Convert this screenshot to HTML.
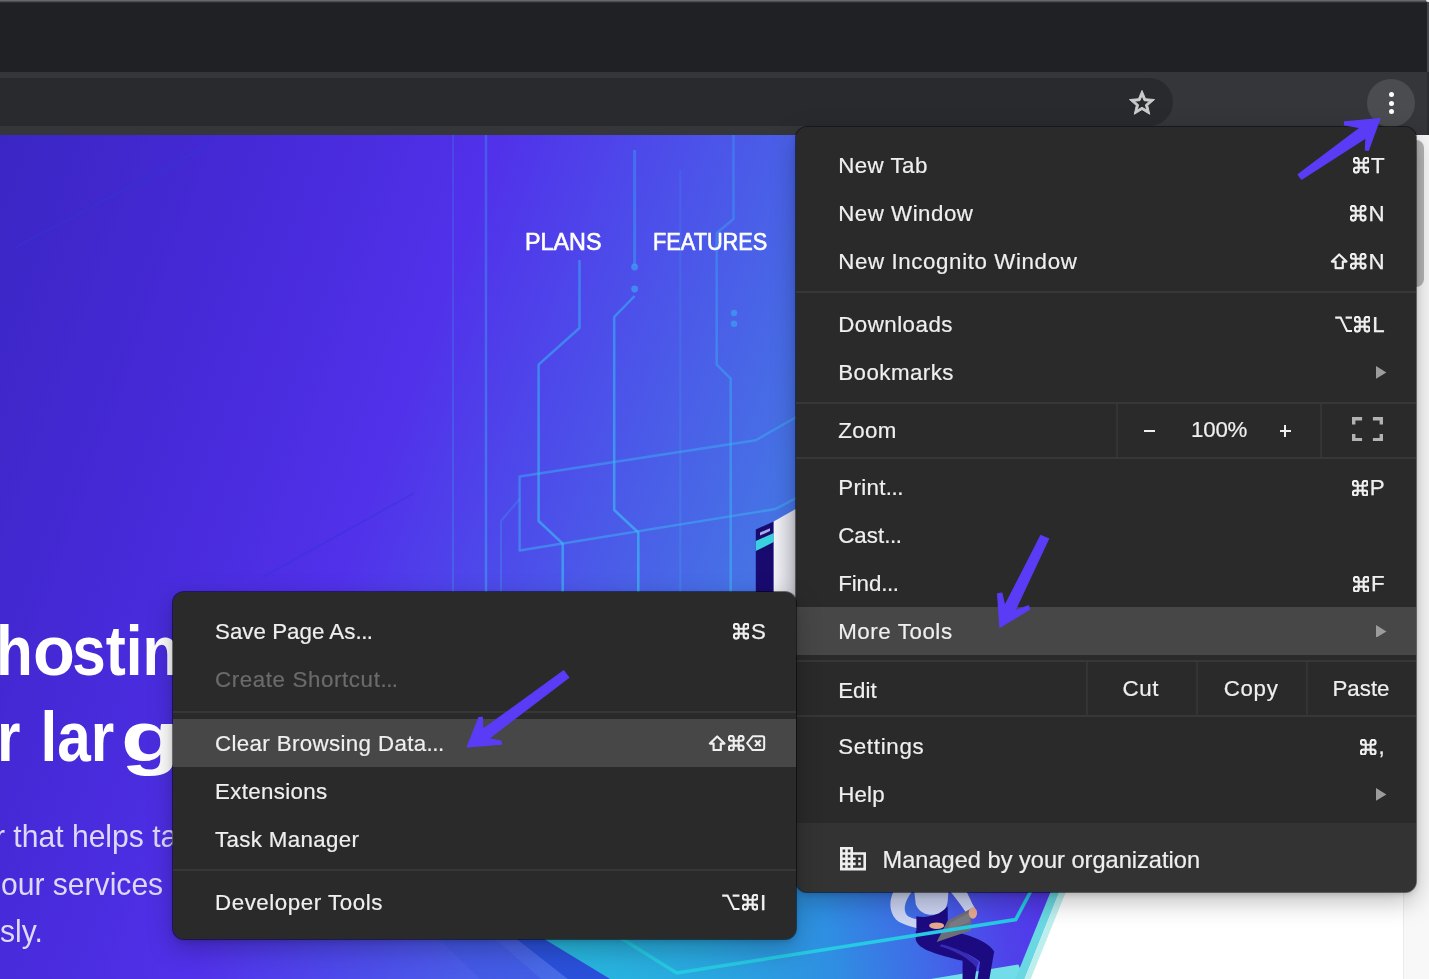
<!DOCTYPE html>
<html>
<head>
<meta charset="utf-8">
<title>Chrome menu</title>
<style>
html,body{margin:0;padding:0;}
body{width:1429px;height:979px;overflow:hidden;position:relative;background:#fff;font-family:"Liberation Sans",sans-serif;}
.abs{position:absolute;}
#titlebar{left:0;top:0;width:1429px;height:72px;background:#202124;}
#titlebar .hl{left:0;top:0;width:1429px;height:3px;background:linear-gradient(#77787b,#45464a 55%,#202124);}
#toolbar{left:0;top:72px;width:1429px;height:63px;background:#35363a;}
#omni{left:-40px;top:78px;width:1213px;height:48px;border-radius:24px;background:#292a2e;}
#kebab{left:1367px;top:79px;width:48px;height:48px;border-radius:24px;background:#4b4c50;}
#kebab i{position:absolute;left:21.5px;width:5px;height:5px;border-radius:50%;background:#fff;}
#page{will-change:transform;left:0;top:135px;width:1403px;height:844px;overflow:hidden;background:#fff;}
#track{left:1403px;top:135px;width:26px;height:844px;background:#f8f8f8;border-left:1px solid #ebebeb;box-sizing:border-box;}
#thumb{left:1408px;top:140px;width:16px;height:147px;border-radius:8px;background:#b4b4b4;}
.menu{will-change:transform;background:#2a2a2b;border-radius:11px;box-shadow:0 0 0 1px rgba(0,0,0,.5),0 9px 26px rgba(0,0,0,.27),0 2px 6px rgba(0,0,0,.16);overflow:hidden;}
#main{left:796px;top:127px;width:619.6px;height:765px;}
#sub{left:173px;top:592px;width:623.4px;height:346.6px;}
.t{position:absolute;white-space:nowrap;color:#efefef;font-size:22.3px;line-height:28px;height:28px;letter-spacing:0.45px;-webkit-text-stroke-width:.2px;}
.dis{color:#6b6b6b;}
.sep{position:absolute;left:0;right:0;height:2px;background:#373737;}
.vsep{position:absolute;width:2px;background:#343434;}
.hi{position:absolute;left:0;right:0;background:#474747;}
.sc{position:absolute;display:flex;align-items:flex-end;justify-content:flex-end;height:28px;color:#efefef;font-size:22.3px;line-height:28px;white-space:nowrap;-webkit-text-stroke-width:.25px;}
.sc svg{margin-bottom:6.1px;margin-right:1.8px;flex:none;}
.d{letter-spacing:-0.5px;}
svg{display:block;}
.nav{color:#fff;font-size:24.1px;line-height:28px;white-space:nowrap;transform-origin:0 0;-webkit-text-stroke:.65px #fff;}
.h1{color:#fff;font-weight:bold;font-size:70px;line-height:80px;white-space:nowrap;transform-origin:0 0;transform:scaleX(.86);}
.p{color:#ddd9fb;font-size:32px;line-height:40px;white-space:nowrap;transform-origin:0 0;transform:scaleX(.94);}
</style>
</head>
<body>
<div id="titlebar" class="abs"><div class="hl abs"></div></div>
<div id="toolbar" class="abs"></div>
<div class="abs" style="left:1427px;top:2px;width:2px;height:70px;background:#46474b"></div>
<div class="abs" style="left:1427px;top:72px;width:2px;height:63px;background:#2c2d31"></div>
<div class="abs" style="left:1426px;top:0;width:3px;height:2px;background:#e8e8e8;border-bottom-left-radius:3px"></div>
<div id="omni" class="abs"></div>
<svg class="abs" style="left:1127.4px;top:87.8px" width="30" height="30" viewBox="0 0 24 24"><path fill="#cbccce" stroke="#cbccce" stroke-width=".8" d="M22 9.24l-7.19-.62L12 2 9.19 8.63 2 9.24l5.46 4.73L5.82 21 12 17.27 18.18 21l-1.63-7.03L22 9.24zM12 15.4l-3.76 2.27 1-4.28-3.32-2.88 4.38-.38L12 6.1l1.71 4.04 4.38.38-3.32 2.88 1 4.28L12 15.4z"/></svg>
<div id="kebab" class="abs"><i style="top:13px"></i><i style="top:21.5px"></i><i style="top:30px"></i></div>
<div id="page" class="abs">
<svg class="abs" style="left:0;top:0" width="1403" height="844" viewBox="0 135 1403 844">
<defs>
<linearGradient id="bg" gradientUnits="userSpaceOnUse" x1="0" y1="135" x2="800" y2="427">
<stop offset="0" stop-color="#3b26c4"/><stop offset=".28" stop-color="#4529d6"/><stop offset=".55" stop-color="#5131ea"/><stop offset=".72" stop-color="#4d4aea"/><stop offset=".86" stop-color="#4a5ee8"/><stop offset="1" stop-color="#4672e5"/>
</linearGradient>
<linearGradient id="plat" gradientUnits="userSpaceOnUse" x1="560" y1="979" x2="1050" y2="900">
<stop offset="0" stop-color="#27b8de"/><stop offset=".3" stop-color="#29a6df"/><stop offset=".55" stop-color="#2f8ee2"/><stop offset=".74" stop-color="#4168e8"/><stop offset=".9" stop-color="#4f42ea"/><stop offset="1" stop-color="#5236ea"/>
</linearGradient>
<linearGradient id="ln" gradientUnits="userSpaceOnUse" x1="0" y1="135" x2="0" y2="600"><stop offset="0" stop-color="#3a94f2"/><stop offset=".5" stop-color="#38acf4"/><stop offset="1" stop-color="#3cc4f6"/></linearGradient>
<linearGradient id="wh" x1="0" y1="0" x2="1" y2="0"><stop offset="0" stop-color="#f4f4f8"/><stop offset="1" stop-color="#cfcfdc"/></linearGradient>
</defs>
<rect x="0" y="135" width="1403" height="844" fill="#fff"/>
<!-- purple/blue hero background -->
<path d="M0 135 H1403 V880 H1058 L1020 979 H0 Z" fill="url(#bg)"/>
<!-- circuit lines -->
<g fill="none" stroke="url(#ln)" stroke-linejoin="round">
<path d="M453 135 V600" stroke-width="2" opacity=".22"/>
<path d="M486 135 V600" stroke-width="2.4" opacity=".42"/>
<path d="M579.5 260 V328 L538.6 364.6 V521 L562.7 543.7 V600" stroke-width="2.5" opacity=".62"/>
<path d="M634.6 150 V266" stroke-width="3" opacity=".5"/>
<path d="M634.6 296 L614.2 317 V510 L638.3 532.5 V600" stroke-width="2.5" opacity=".66"/>
<path d="M680.3 170 V600" stroke-width="2" opacity=".2"/>
<path d="M733.5 135 V219 L716.7 233 V364.6 L730.7 378.6 V600" stroke-width="2.4" opacity=".5"/>
<path d="M800 415 L755.9 440.2 L519.6 476.5 V550.5 L775.5 509 L800 496" stroke-width="2.4" opacity=".45"/>
<path d="M519.6 499 L501 521 V600" stroke-width="2" opacity=".22"/>
</g>
<g fill="#3f9cf2" opacity=".75">
<circle cx="634.6" cy="267" r="3.4"/><circle cx="634.6" cy="289" r="3.4"/>
<circle cx="734" cy="313" r="3.2"/><circle cx="734" cy="323.7" r="3.2"/>
</g>
<!-- faint hex outlines on the left -->
<g fill="none" stroke="#3534d8" stroke-width="2" opacity=".45">
<path d="M16 247 L213 143"/>
<path d="M263 577 L414 493"/>
</g>
<!-- server illustration peeking left of the menu -->
<path d="M755.8 529.4 L773.7 521.5 V600 H755.8 Z" fill="#190a70"/>
<path d="M755.8 541 L773.7 533 V542 L755.8 551 Z" fill="#39d0e0"/>
<path d="M760 532.6 L770 528.2 V531 L760 535.6 Z" fill="#a9aee8"/>
<path d="M773.7 521.5 L800 506.5 V600 H773.7 Z" fill="url(#wh)"/>
<!-- bottom platform -->
<path d="M485 930 L541 979 H480 L430 930 Z" fill="#3f56e2" opacity=".6"/>
<path d="M505 930 H545 L610.2 979 H567.7 Z" fill="#2a50da"/>
<path d="M538 925 H796 V885 H1054 L1018 979 H610.2 L545 939.6 Z" fill="url(#plat)"/>
<!-- cyan lines -->
<g transform="translate(796 880) scale(.21973)">
<path d="M610 451 L1012 384 L1040 451 Z" fill="#72dde9"/>
<path d="M1160 50 L1200 50 L1040 451 L998 451 Z" fill="#69d8e2"/>
<path d="M1200 50 L1230 50 L1068 451 L1040 451 Z" fill="#bdeeee"/>
<!-- person -->
<path d="M538 50 L545 110 C560 150 600 160 620 158 C660 160 682 140 690 100 L694 50 Z" fill="#ccd4f3"/>
<path d="M445 50 C425 90 420 140 455 180 C480 205 540 215 600 235 L618 198 C570 182 520 175 505 160 C485 135 495 95 530 50 Z" fill="#ccd4f3"/>
<path d="M700 50 L775 50 C790 80 800 105 815 130 L775 150 C755 120 730 85 700 50 Z" fill="#ccd4f3"/>
<path d="M548 165 C580 172 650 170 690 120 L692 235 L548 245 Z" fill="#1c0a80"/>
<path d="M690 232 C780 245 870 275 902 325 L880 451 L826 451 L838 372 C790 335 720 305 650 290 Z" fill="#1c0a80"/>
<path d="M545 232 L545 272 C558 318 640 338 758 368 L758 451 L814 451 L826 372 C770 330 700 290 692 232 Z" fill="#1c0a80"/>
<path d="M660 292 C720 305 790 338 832 372 L822 400 C780 350 710 318 655 302 Z" fill="#3a2bb4"/>
<path d="M690 186 L800 128 L796 230 L640 282 Z" fill="#6d6d77"/>
<path d="M700 196 L792 146 L790 190 L690 230 Z" fill="#7a7a84"/>
<ellipse cx="640" cy="208" rx="34" ry="15" fill="#e6a88f"/>
<ellipse cx="805" cy="150" rx="19" ry="26" fill="#e6a88f"/>
</g>
<path d="M608 930 L676.7 972.9 L1015.7 919.6 L1033 887" fill="none" stroke="#26cae2" stroke-width="3.5" stroke-linejoin="miter"/>
</svg>
<div class="abs nav" style="left:525.4px;top:92.8px;transform:scaleX(.968)">PLANS</div>
<div class="abs nav" style="left:653.4px;top:92.8px;transform:scaleX(.902)">FEATURES</div>
<div class="abs h1" style="left:-4px;top:476.2px">h<span style="display:inline-block;transform:scaleX(1.14);transform-origin:0 50%;margin-right:3.2px">o</span>sting</div>
<div class="abs h1" style="left:-3px;top:561.7px">r<span style="margin-left:4px"> </span>lar<span style="display:inline-block;transform:scaleX(1.62);transform-origin:0 50%;margin-left:8px">g</span></div>
<div class="abs p" style="left:-5px;top:681px">r that helps ta</div>
<div class="abs p" style="left:0.5px;top:728.7px">our services</div>
<div class="abs p" style="left:0px;top:776.4px">sly.</div>

</div>
<div id="track" class="abs"></div>
<div id="thumb" class="abs"></div>
<div id="main" class="abs menu">
<div class="hi" style="top:479.5px;height:48.5px"></div>
<div class="abs" style="left:0;right:0;top:695.5px;bottom:0;background:#333334"></div>
<div class="sep" style="top:164.3px"></div>
<div class="sep" style="top:274.5px"></div>
<div class="sep" style="top:329.6px"></div>
<div class="sep" style="top:532.6px"></div>
<div class="sep" style="top:587.6px"></div>
<div class="t " style="left:42.2px;top:24.6px;letter-spacing:0.46px;">New Tab</div>
<div class="t " style="left:42.2px;top:72.6px;letter-spacing:0.52px;">New Window</div>
<div class="t " style="left:42.2px;top:120.6px;letter-spacing:0.62px;">New Incognito Window</div>
<div class="t " style="left:42.2px;top:183.8px;letter-spacing:0.49px;">Downloads</div>
<div class="t " style="left:42.2px;top:231.9px;letter-spacing:0.47px;">Bookmarks</div>
<div class="t " style="left:42.2px;top:290.2px;letter-spacing:0.40px;">Zoom</div>
<div class="t " style="left:42.2px;top:347.3px;letter-spacing:0.35px;">Print<span class="d">...</span></div>
<div class="t " style="left:42.2px;top:395.1px;letter-spacing:0.08px;">Cast<span class="d">...</span></div>
<div class="t " style="left:42.2px;top:443.0px;letter-spacing:-0.07px;">Find<span class="d">...</span></div>
<div class="t " style="left:42.2px;top:491.2px;letter-spacing:0.58px;">More Tools</div>
<div class="t " style="left:42.2px;top:549.6px;letter-spacing:0.03px;">Edit</div>
<div class="t " style="left:42.2px;top:606.2px;letter-spacing:0.70px;">Settings</div>
<div class="t " style="left:42.2px;top:654.4px;letter-spacing:0.21px;">Help</div>
<div class="t " style="left:86.6px;top:719.1px;letter-spacing:0.00px;font-size:23.6px;">Managed by your organization</div>
<div class="sc" style="right:31.0px;top:24.6px;"><svg width="16.4" height="16.4" viewBox="2 2 20 20" fill="none" stroke="#efefef" stroke-width="2.62"><path d="M15 9V6a3 3 0 1 1 3 3H6a3 3 0 1 1 3-3v12a3 3 0 1 1-3-3h12a3 3 0 1 1-3 3V9z"/></svg><span>T</span></div>
<div class="sc" style="right:31.0px;top:72.6px;"><svg width="16.4" height="16.4" viewBox="2 2 20 20" fill="none" stroke="#efefef" stroke-width="2.62"><path d="M15 9V6a3 3 0 1 1 3 3H6a3 3 0 1 1 3-3v12a3 3 0 1 1-3-3h12a3 3 0 1 1-3 3V9z"/></svg><span>N</span></div>
<div class="sc" style="right:31.0px;top:120.6px;"><svg width="18.4" height="16.4" viewBox="0 0 18.4 16.4" fill="none" stroke="#efefef" stroke-width="2.15" stroke-linejoin="round"><path d="M9.2 1.4 L1.9 8.6 H5.6 V15.2 H12.8 V8.6 H16.5 Z"/></svg><svg width="16.4" height="16.4" viewBox="2 2 20 20" fill="none" stroke="#efefef" stroke-width="2.62"><path d="M15 9V6a3 3 0 1 1 3 3H6a3 3 0 1 1 3-3v12a3 3 0 1 1-3-3h12a3 3 0 1 1-3 3V9z"/></svg><span>N</span></div>
<div class="sc" style="right:31.0px;top:183.8px;"><svg width="17.7" height="16.4" viewBox="0 0 17.7 16.4" fill="none" stroke="#efefef" stroke-width="2.15"><path d="M0.2 1.6 H5.6 L12 15 H17.5 M10.6 1.6 H17.5"/></svg><svg width="16.4" height="16.4" viewBox="2 2 20 20" fill="none" stroke="#efefef" stroke-width="2.62"><path d="M15 9V6a3 3 0 1 1 3 3H6a3 3 0 1 1 3-3v12a3 3 0 1 1-3-3h12a3 3 0 1 1-3 3V9z"/></svg><span>L</span></div>
<div class="sc" style="right:31.0px;top:347.3px;"><svg width="16.4" height="16.4" viewBox="2 2 20 20" fill="none" stroke="#efefef" stroke-width="2.62"><path d="M15 9V6a3 3 0 1 1 3 3H6a3 3 0 1 1 3-3v12a3 3 0 1 1-3-3h12a3 3 0 1 1-3 3V9z"/></svg><span>P</span></div>
<div class="sc" style="right:31.0px;top:443.0px;"><svg width="16.4" height="16.4" viewBox="2 2 20 20" fill="none" stroke="#efefef" stroke-width="2.62"><path d="M15 9V6a3 3 0 1 1 3 3H6a3 3 0 1 1 3-3v12a3 3 0 1 1-3-3h12a3 3 0 1 1-3 3V9z"/></svg><span>F</span></div>
<div class="sc" style="right:31.0px;top:606.2px;"><svg width="16.4" height="16.4" viewBox="2 2 20 20" fill="none" stroke="#efefef" stroke-width="2.62"><path d="M15 9V6a3 3 0 1 1 3 3H6a3 3 0 1 1 3-3v12a3 3 0 1 1-3-3h12a3 3 0 1 1-3 3V9z"/></svg><span>,</span></div>
<svg class="abs" style="left:580.3px;top:238.8px" width="10.4" height="12.8" viewBox="0 0 10.4 12.8"><path d="M0 0 L10.4 6.4 L0 12.8 Z" fill="#9c9c9c"/></svg>
<svg class="abs" style="left:580.3px;top:497.6px" width="10.4" height="12.8" viewBox="0 0 10.4 12.8"><path d="M0 0 L10.4 6.4 L0 12.8 Z" fill="#9c9c9c"/></svg>
<svg class="abs" style="left:580.3px;top:660.9px" width="10.4" height="12.8" viewBox="0 0 10.4 12.8"><path d="M0 0 L10.4 6.4 L0 12.8 Z" fill="#9c9c9c"/></svg>
<div class="vsep" style="left:320.3px;top:276.5px;height:53.0px"></div>
<div class="vsep" style="left:523.6px;top:276.5px;height:53.0px"></div>
<div class="abs" style="left:347.8px;top:302.5px;width:11.5px;height:2px;background:#efefef"></div>
<div class="abs" style="left:483.7px;top:302.8px;width:11.5px;height:2px;background:#efefef"></div>
<div class="abs" style="left:488.4px;top:298.1px;width:2px;height:11.5px;background:#efefef"></div>
<div class="t " style="left:395.0px;top:288.9px;letter-spacing:-0.21px;">100%</div>
<svg class="abs" style="left:556.0px;top:289.5px" width="31" height="24.4" viewBox="0 0 31 24.4" fill="none" stroke="#b2b2b2" stroke-width="3.4"><path d="M1.7 7.4 V1.7 H10.1 M20.9 1.7 H29.3 V7.4 M29.3 17 V22.7 H20.9 M10.1 22.7 H1.7 V17"/></svg>
<div class="vsep" style="left:289.8px;top:534.6px;height:53.0px"></div>
<div class="vsep" style="left:399.8px;top:534.6px;height:53.0px"></div>
<div class="vsep" style="left:509.8px;top:534.6px;height:53.0px"></div>
<div class="t " style="left:326.5px;top:548.1px;letter-spacing:0.65px;">Cut</div>
<div class="t " style="left:427.8px;top:548.1px;letter-spacing:0.65px;">Copy</div>
<div class="t " style="left:536.5px;top:548.1px;letter-spacing:-0.01px;">Paste</div>
<svg class="abs" style="left:43.7px;top:720.4px" width="26" height="23.4" viewBox="2 3 20 18"><path fill="#efefef" d="M12 7V3H2v18h20V7H12zM6 19H4v-2h2v2zm0-4H4v-2h2v2zm0-4H4V9h2v2zm0-4H4V5h2v2zm4 12H8v-2h2v2zm0-4H8v-2h2v2zm0-4H8V9h2v2zm0-4H8V5h2v2zm10 12h-8v-2h2v-2h-2v-2h2v-2h-2V9h8v10zm-2-8h-2v2h2v-2zm0 4h-2v2h2v-2z"/></svg>
</div>
<div id="sub" class="abs menu">
<div class="hi" style="top:126.8px;height:47.8px"></div>
<div class="sep" style="top:118.6px"></div>
<div class="sep" style="top:276.8px"></div>
<div class="t " style="left:42.0px;top:25.9px;letter-spacing:0.03px;">Save Page As<span class="d">...</span></div>
<div class="t dis" style="left:42.0px;top:73.7px;letter-spacing:0.62px;">Create Shortcut<span class="d">...</span></div>
<div class="t " style="left:42.0px;top:137.5px;letter-spacing:0.37px;">Clear Browsing Data<span class="d">...</span></div>
<div class="t " style="left:42.0px;top:185.5px;letter-spacing:0.35px;">Extensions</div>
<div class="t " style="left:42.0px;top:233.6px;letter-spacing:0.36px;">Task Manager</div>
<div class="t " style="left:42.0px;top:296.8px;letter-spacing:0.57px;">Developer Tools</div>
<div class="sc" style="right:30.6px;top:25.9px;"><svg width="16.4" height="16.4" viewBox="2 2 20 20" fill="none" stroke="#efefef" stroke-width="2.62"><path d="M15 9V6a3 3 0 1 1 3 3H6a3 3 0 1 1 3-3v12a3 3 0 1 1-3-3h12a3 3 0 1 1-3 3V9z"/></svg><span>S</span></div>
<div class="sc" style="right:29.0px;top:137.5px;"><svg width="18.4" height="16.4" viewBox="0 0 18.4 16.4" fill="none" stroke="#efefef" stroke-width="2.15" stroke-linejoin="round"><path d="M9.2 1.4 L1.9 8.6 H5.6 V15.2 H12.8 V8.6 H16.5 Z"/></svg><svg width="16.4" height="16.4" viewBox="2 2 20 20" fill="none" stroke="#efefef" stroke-width="2.62"><path d="M15 9V6a3 3 0 1 1 3 3H6a3 3 0 1 1 3-3v12a3 3 0 1 1-3-3h12a3 3 0 1 1-3 3V9z"/></svg><svg width="19.2" height="16.4" viewBox="0 0 19.2 16.4" fill="none" stroke="#efefef" stroke-width="2.00" stroke-linejoin="round"><path d="M6.6 1.3 H16.4 a1.8 1.8 0 0 1 1.8 1.8 V13.3 a1.8 1.8 0 0 1 -1.8 1.8 H6.6 L1.1 8.2 Z"/><path d="M9 5.2 L14.6 11.2 M14.6 5.2 L9 11.2"/></svg></div>
<div class="sc" style="right:30.2px;top:296.8px;"><svg width="17.7" height="16.4" viewBox="0 0 17.7 16.4" fill="none" stroke="#efefef" stroke-width="2.15"><path d="M0.2 1.6 H5.6 L12 15 H17.5 M10.6 1.6 H17.5"/></svg><svg width="16.4" height="16.4" viewBox="2 2 20 20" fill="none" stroke="#efefef" stroke-width="2.62"><path d="M15 9V6a3 3 0 1 1 3 3H6a3 3 0 1 1 3-3v12a3 3 0 1 1-3-3h12a3 3 0 1 1-3 3V9z"/></svg><span>I</span></div>
</div>
<svg class="abs" style="left:0;top:0;pointer-events:none" width="1429" height="979" viewBox="0 0 1429 979">
<g fill="#5a3cf7" stroke="#5a3cf7" stroke-width="1.2" stroke-linejoin="round">
<path d="M1298.2 174.6 L1360.3 127.7 L1344.6 125 L1344.4 121.9 L1380 118.6 L1368.4 150.4 L1365.4 150 L1366 137.8 L1301.6 179.2 Z"/>
<path d="M1040.8 535.6 L1004.7 606 L1001.8 593 L997.6 593.8 L999.9 627.2 L1029.6 609.2 L1028.4 605.8 L1014.8 610.8 L1048.6 538.7 Z"/>
<path d="M563.7 670.8 L482.9 729.3 L482.3 717.3 L478.8 717.6 L467.2 746.9 L501.5 744.2 L500.9 741 L488.8 738.5 L568.8 677.5 Z"/>
</g>
</svg>

</body>
</html>
